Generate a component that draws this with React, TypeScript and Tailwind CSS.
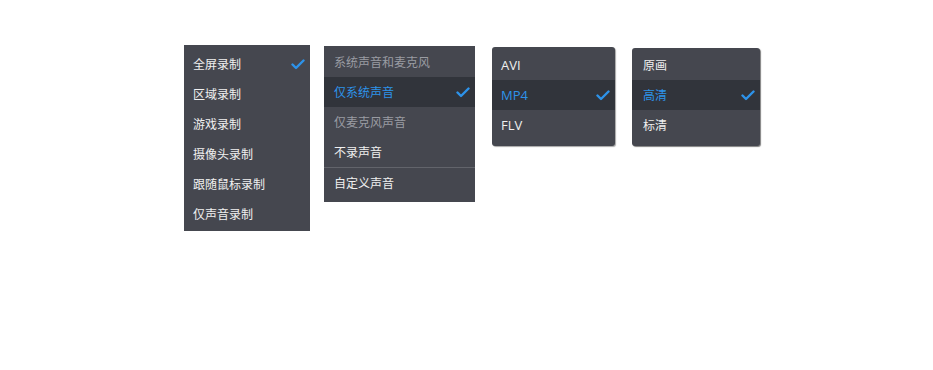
import React from "react";

const Check = () => (
  <svg width="14" height="11" viewBox="0 0 14 11" fill="none">
    <path d="M1.5 5.5 L5 9 L12.5 1.5" stroke="#2d93ea" strokeWidth="2.4" strokeLinecap="round" strokeLinejoin="round" />
  </svg>
);

type Item = { label: string; active?: boolean; dim?: boolean };

const font = { fontFamily: '"Segoe UI", "Open Sans", "Noto Sans CJK SC", sans-serif' };

function Row({ it, pl, size = "text-[12px]" }: { it: Item; pl: string; size?: string }) {
  return (
    <div
      className={`flex h-[30px] items-center justify-between pt-[2px] pr-[5px] ${size} ${pl} ${
        it.active ? "bg-[#31343b] text-[#2d93ea]" : it.dim ? "text-[#9a9ca3]" : "text-[#f0f0f0]"
      }`}
    >
      <span>{it.label}</span>
      {it.active && (
        <span className="-mt-[2px]">
          <Check />
        </span>
      )}
    </div>
  );
}

export default function App() {
  const m1: Item[] = [
    { label: "全屏录制" },
    { label: "区域录制" },
    { label: "游戏录制" },
    { label: "摄像头录制" },
    { label: "跟随鼠标录制" },
    { label: "仅声音录制" },
  ];
  const m3: Item[] = [{ label: "AVI" }, { label: "MP4", active: true }, { label: "FLV" }];
  const m4: Item[] = [{ label: "原画" }, { label: "高清", active: true }, { label: "标清" }];
  return (
    <div className="h-[370px] w-[933px] bg-white" style={font}>
      <div className="flex items-start pl-[184px]">
        <div className="mt-[45px] w-[126px] bg-[#45474f] pt-[4px] pb-[2px]">
          {m1.map((it, i) => (
            <div key={it.label} className="flex h-[30px] items-center justify-between pt-[2px] pl-[9px] pr-[5px] text-[12px] text-[#f0f0f0]">
              <span>{it.label}</span>
              {i === 0 && (
                <span className="-mt-[2px]">
                  <Check />
                </span>
              )}
            </div>
          ))}
        </div>
        <div className="ml-[14px] mt-[46px] w-[151px] bg-[#45474f] pt-[1px] pb-[4px]">
          <Row it={{ label: "系统声音和麦克风", dim: true }} pl="pl-[10px]" />
          <Row it={{ label: "仅系统声音", active: true }} pl="pl-[10px]" />
          <Row it={{ label: "仅麦克风声音", dim: true }} pl="pl-[10px]" />
          <Row it={{ label: "不录声音" }} pl="pl-[10px]" />
          <div className="h-px bg-[#62646b]" />
          <Row it={{ label: "自定义声音" }} pl="pl-[10px]" />
        </div>
        <div className="ml-[17px] mt-[47px] w-[123px] rounded-[3px] bg-[#45474f] pt-[3px] pb-[6px] shadow-[1px_1px_1px_rgba(0,0,0,0.35)]">
          {m3.map((it) => (
            <Row key={it.label} it={it} pl="pl-[9px]" size="text-[13px]" />
          ))}
        </div>
        <div className="ml-[17px] mt-[48px] w-[128px] rounded-[3px] bg-[#45474f] pt-[2px] pb-[6px] shadow-[1px_1px_1px_rgba(0,0,0,0.5)]">
          {m4.map((it) => (
            <Row key={it.label} it={it} pl="pl-[11px]" />
          ))}
        </div>
      </div>
    </div>
  );
}
